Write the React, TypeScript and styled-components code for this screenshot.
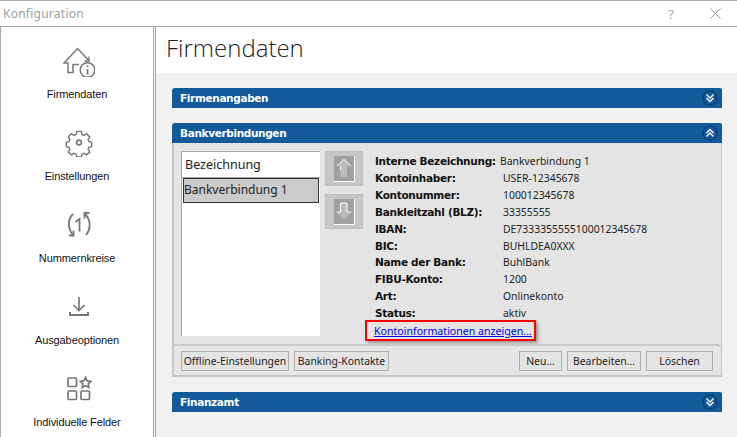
import React from 'react';
import styled, { createGlobalStyle } from 'styled-components';

const Global = createGlobalStyle`
  html, body { margin: 0; padding: 0; background: #fff; overflow: hidden; }
  * { box-sizing: border-box; }
`;
const Window = styled.div`
  width: 737px; height: 437px; display: flex; flex-direction: column; overflow: hidden;
  font-family: "Noto Sans", "Liberation Sans", sans-serif; color: #111; background: #fff;
`;
const TitleBar = styled.header`
  height: 27px; flex: none; display: flex; align-items: center; padding: 0 16px 0 3px;
  border-top: 1px solid #aaa; border-bottom: 1px solid #a8a8a8;
  color: #a0a0a0; font-size: 12px;
`;
const TitleText = styled.span`flex: 1; letter-spacing: .25px;`;
const HelpMark = styled.span`font-size: 13px; margin-right: 36px; color: #a8a8a8;`;
const Body = styled.div`flex: 1; display: flex; min-height: 0;`;
const Sidebar = styled.nav`
  width: 154px; flex: none; border-left: 1px solid #a8a8a8; border-right: 1px solid #a8a8a8;
  display: flex; flex-direction: column; align-items: center; padding-top: 17px; margin-right: 1px;
`;
const NavItem = styled.div`
  height: 82px; flex: none; width: 100%; display: flex; flex-direction: column; align-items: center; color: #111;
`;
const NavIcon = styled.div`height: 34px; width: 34px; display: flex; align-items: center; justify-content: center; color: #777; margin-left: 3px;`;
const NavLabel = styled.span`font: 11px/15px "Liberation Sans", sans-serif; letter-spacing: -.1px; margin-top: 9px; white-space: nowrap;`;
const Main = styled.main`flex: 1; border-left: 1px solid #a8a8a8; display: flex; flex-direction: column; min-width: 0;`;
const PageHeader = styled.div`height: 46px; flex: none; padding: 4px 0 0 10px; background: #fff;`;
const PageTitle = styled.h1`margin: 0; font: 300 24px/34px "Open Sans", sans-serif; color: #222;`;
const Content = styled.div`flex: 1; background: #f1f1f1; padding: 15px 15px 0 16px; display: flex; flex-direction: column; gap: 15px;`;
const Panel = styled.section`display: flex; flex-direction: column;`;
const PanelHead = styled.div`
  height: 20px; background: #135a9a; border-radius: 3px 2px 0 0; display: flex; align-items: center; justify-content: space-between;
  padding: 0 4px 0 8px; color: #fff; font: 700 10.5px "DejaVu Sans", sans-serif; letter-spacing: -.35px;
`;
const PanelBody = styled.div`
  background: #e4e4e4; border: 1px solid #c4c4c4; border-width: 0 1px 2px 2px; height: 234px; display: flex; flex-direction: column;
`;
const Upper = styled.div`height: 201px; flex: none; display: flex; padding: 8px 0 0 7px;`;
const ListBox = styled.div`
  width: 139px; height: 185px; background: #fff; border: 1px solid #a8a8a8; border-width: 1px 0 0 1px; flex: none;
`;
const ListHead = styled.div`height: 26px; padding-left: 3px; font-size: 12.5px; line-height: 25px; border-bottom: 1px solid #a0a0a0; color: #222;`;
const ListRow = styled.div`height: 25px; margin: 0 1px 0 1px; background: #cbcbcb; border: 1px solid #333; font-size: 12px; line-height: 22px; color: #222;`;
const Movers = styled.div`display: flex; flex-direction: column; gap: 8px; margin-left: 5px; flex: none;`;
const MoveBtn = styled.div`width: 38px; height: 35px; background: #c6c6c6; border: 1px solid #bcbcbc; display: flex; align-items: center; justify-content: center;`;
const Details = styled.div`margin-left: 12px; display: flex; flex-direction: column; padding-top: 2px;`;
const Grid = styled.dl`margin: 0; display: grid; grid-template-columns: 128px auto; grid-auto-rows: 16.85px; align-items: center;`;
const Term = styled.dt`font: 700 10.5px "DejaVu Sans", sans-serif; letter-spacing: -.3px; white-space: nowrap; color: #111;`;
const Value = styled.dd<{ $shift?: boolean }>`margin: 0 0 0 ${p => (p.$shift ? '-3px' : '0')}; font: 10.4px "Noto Sans", sans-serif; white-space: nowrap; color: #222;`;
const LinkBox = styled.div`
  margin: -1px 0 0 -10px; width: 171px; height: 21px; border: 2px solid #f00; box-shadow: 2px 2px 3px rgba(0,0,0,.35);
  padding-left: 7px; display: flex; align-items: center;
`;
const InfoLink = styled.a`color: #0000e8; font: 10.6px "Noto Sans", sans-serif; text-decoration: underline; white-space: nowrap;`;
const Toolbar = styled.div`
  margin-left: -1px; flex: 1; border-top: 2px solid #c8c8c8; border-top-right-radius: 4px; border-left: 1px solid #c8c8c8;
  display: flex; align-items: center; padding: 0 8px 0 7px; gap: 5px; background: #e6e6e6;
`;
const Btn = styled.button<{ $w: number; $push?: boolean }>`
  width: ${p => p.$w}px; height: 20px; padding: 0; margin-left: ${p => (p.$push ? 'auto' : '0')};
  background: #e4e4e4; border: 1px solid #adadad; font: 10.4px "Noto Sans", sans-serif; color: #222; white-space: nowrap;
`;

const Toggle = ({ up }: { up?: boolean }) => (
  <svg width="16" height="16" viewBox="0 0 16 16" aria-hidden="true">
    <circle cx="8" cy="8" r="7" fill="#135a9a" stroke="#0a3460" />
    <path d={up ? 'M4.500 8 8 4.500 11.500 8M4.500 11.500 8 8l3.500 3.500' : 'M4.500 4.500 8 8l3.500-3.500M4.500 8 8 11.500 11.500 8'} fill="none" stroke="#fff" strokeWidth="1.400" />
  </svg>
);
const MoveIcon = ({ down }: { down?: boolean }) => (
  <svg width="21" height="26" viewBox="0 0 21 26" aria-hidden="true">
    <rect width="20" height="25" fill="#a0a0a0" />
    <path d="M20.500 0v25.500H0" fill="none" stroke="#fff" />
    {down ? (
      <>
        <path d="M6.500 4h6.500v9h4.500L10 21l-7.500-8h4z" fill="#bcbcbc" />
        <path d="M2.500 13h4V4h6.500v9h4.500" fill="none" stroke="#fff" />
      </>
    ) : (
      <>
        <path d="M6.500 21V10H3l7-6.500 7 6.500h-4v11z" fill="#bcbcbc" />
        <path d="M3 10l7-6.500 7 6.500M6.500 10v4" fill="none" stroke="#fff" />
      </>
    )}
  </svg>
);
const HouseIcon = () => (
  <svg width="32" height="32" viewBox="0 -2 32 32" fill="none" stroke="#777" strokeWidth="1.500" aria-hidden="true">
    <path d="M16 17.500h-6V25.500H5V16H1L14.500 1.500 26 13.500" />
    <path d="M26 9.500v4.500h-4.500" strokeWidth="1.300" />
    <circle cx="24.500" cy="23" r="7.300" />
    <path d="M24.500 22v5.500M24.500 18.500v1.500" strokeWidth="1.700" />
  </svg>
);
const GearIcon = () => (
  <svg width="28" height="28" viewBox="0 0 28 28" fill="none" stroke="#777" strokeWidth="1.600" aria-hidden="true">
    <path d="M11.500 2h5l.8 3.400 2.200 1 3-1.800 3.400 3.500-1.800 3 .9 2.100 3 .8v5l-3 .8-.9 2.200 1.800 3-3.400 3-3-1.600-2.200.9-.8 3h-5l-.8-3-2.200-.9-3 1.600-3.400-3 1.800-3-.9-2.200-3-.8v-5l3-.8.9-2.100-1.800-3 3.400-3.500 3 1.800 2.200-1z" transform="translate(1.400 .6) scale(.9)" />
    <circle cx="14" cy="13.500" r="2.400" />
  </svg>
);
const CycleIcon = () => (
  <svg width="28" height="28" viewBox="0 0 28 28" fill="none" stroke="#777" strokeWidth="1.800" aria-hidden="true">
    <path d="M8 3C2 9 3 18 8 24M20 3C26 9 26 18 21 24" />
    <path d="M8.500 19.500v5H4M19.500 7.500v-5.500H24.500" />
    <path d="M10.500 11l4-3V20.500" />
  </svg>
);
const DownloadIcon = () => (
  <svg width="24" height="24" viewBox="0 0 24 24" fill="none" stroke="#777" strokeWidth="1.700" aria-hidden="true">
    <path d="M12 2v13M6.500 10l5.500 5.500 5.500-5.500" />
    <path d="M3 17v3h18v-3" strokeWidth="2" />
  </svg>
);
const FieldsIcon = () => (
  <svg width="26" height="26" viewBox="0 0 26 26" fill="none" stroke="#777" strokeWidth="1.700" aria-hidden="true">
    <rect x="2" y="2" width="8.500" height="8.500" rx="1" />
    <rect x="2" y="15" width="8.500" height="8.500" rx="1" />
    <rect x="15" y="15" width="8.500" height="8.500" rx="1" />
    <path d="m19.500 1.500 1.700 3.400 3.600.5-2.600 2.500.7 3.600-3.400-1.800-3.200 1.800.6-3.600-2.600-2.500 3.600-.5z" />
  </svg>
);

const nav = [
  { label: 'Firmendaten', icon: <HouseIcon /> },
  { label: 'Einstellungen', icon: <GearIcon /> },
  { label: 'Nummernkreise', icon: <CycleIcon /> },
  { label: 'Ausgabeoptionen', icon: <DownloadIcon /> },
  { label: 'Individuelle Felder', icon: <FieldsIcon /> },
];
const details = [
  ['Interne Bezeichnung:', 'Bankverbindung 1'],
  ['Kontoinhaber:', 'USER-12345678'],
  ['Kontonummer:', '100012345678'],
  ['Bankleitzahl (BLZ):', '33355555'],
  ['IBAN:', 'DE7333355555100012345678'],
  ['BIC:', 'BUHLDEA0XXX'],
  ['Name der Bank:', 'BuhlBank'],
  ['FIBU-Konto:', '1200'],
  ['Art:', 'Onlinekonto'],
  ['Status:', 'aktiv'],
];

export default function App() {
  return (
    <Window>
      <Global />
      <TitleBar>
        <TitleText>Konfiguration</TitleText>
        <HelpMark>?</HelpMark>
        <svg width="11" height="11" viewBox="0 0 11 11" stroke="#999" aria-hidden="true"><path d="M.5.500l10 10M10.500.500l-10 10" /></svg>
      </TitleBar>
      <Body>
        <Sidebar>
          {nav.map(n => (
            <NavItem key={n.label}>
              <NavIcon>{n.icon}</NavIcon>
              <NavLabel>{n.label}</NavLabel>
            </NavItem>
          ))}
        </Sidebar>
        <Main>
          <PageHeader><PageTitle>Firmendaten</PageTitle></PageHeader>
          <Content>
            <Panel>
              <PanelHead>Firmenangaben<Toggle /></PanelHead>
            </Panel>
            <Panel>
              <PanelHead>Bankverbindungen<Toggle up /></PanelHead>
              <PanelBody>
                <Upper>
                  <ListBox>
                    <ListHead>Bezeichnung</ListHead>
                    <ListRow>Bankverbindung 1</ListRow>
                  </ListBox>
                  <Movers>
                    <MoveBtn><MoveIcon /></MoveBtn>
                    <MoveBtn><MoveIcon down /></MoveBtn>
                  </Movers>
                  <Details>
                    <Grid>
                      {details.map(([k, v], i) => (
                        <React.Fragment key={k}>
                          <Term>{k}</Term>
                          <Value $shift={i === 0}>{v}</Value>
                        </React.Fragment>
                      ))}
                    </Grid>
                    <LinkBox><InfoLink href="#">Kontoinformationen anzeigen...</InfoLink></LinkBox>
                  </Details>
                </Upper>
                <Toolbar>
                  <Btn $w={108}>Offline-Einstellungen</Btn>
                  <Btn $w={95}>Banking-Kontakte</Btn>
                  <Btn $w={43} $push>Neu...</Btn>
                  <Btn $w={74}>Bearbeiten...</Btn>
                  <Btn $w={67}>Löschen</Btn>
                </Toolbar>
              </PanelBody>
            </Panel>
            <Panel>
              <PanelHead>Finanzamt<Toggle /></PanelHead>
            </Panel>
          </Content>
        </Main>
      </Body>
    </Window>
  );
}
